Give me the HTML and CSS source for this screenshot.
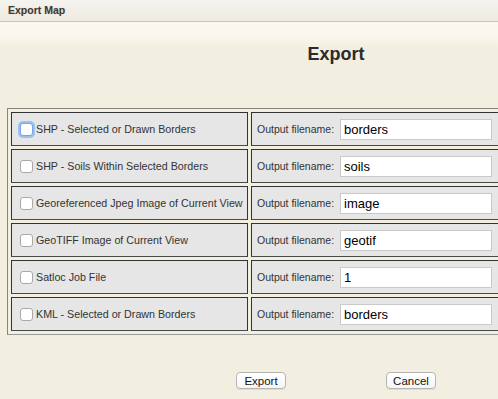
FILE: index.html
```html
<!DOCTYPE html>
<html lang="en">
<head>
  <meta charset="UTF-8" />
  <title>Export Map</title>
  <link rel="stylesheet" href="styles.css">
</head>
<body>
  <div class="window">
    <div class="titlebar">Export Map</div>

    <div class="dialog">
      <h1 class="heading">Export</h1>

      <table class="export-table">
        <tr>
          <td class="opt-cell"><label class="cell"><input type="checkbox" class="check focused">SHP - Selected or Drawn Borders</label></td>
          <td class="file-cell"><div class="cell"><span class="file-label">Output filename:</span><input type="text" class="file-input" value="borders"></div></td>
        </tr>
        <tr>
          <td class="opt-cell"><label class="cell"><input type="checkbox" class="check">SHP - Soils Within Selected Borders</label></td>
          <td class="file-cell"><div class="cell"><span class="file-label">Output filename:</span><input type="text" class="file-input" value="soils"></div></td>
        </tr>
        <tr>
          <td class="opt-cell"><label class="cell"><input type="checkbox" class="check">Georeferenced Jpeg Image of Current View</label></td>
          <td class="file-cell"><div class="cell"><span class="file-label">Output filename:</span><input type="text" class="file-input" value="image"></div></td>
        </tr>
        <tr>
          <td class="opt-cell"><label class="cell"><input type="checkbox" class="check">GeoTIFF Image of Current View</label></td>
          <td class="file-cell"><div class="cell"><span class="file-label">Output filename:</span><input type="text" class="file-input" value="geotif"></div></td>
        </tr>
        <tr>
          <td class="opt-cell"><label class="cell"><input type="checkbox" class="check">Satloc Job File</label></td>
          <td class="file-cell"><div class="cell"><span class="file-label">Output filename:</span><input type="text" class="file-input" value="1"></div></td>
        </tr>
        <tr>
          <td class="opt-cell"><label class="cell"><input type="checkbox" class="check">KML - Selected or Drawn Borders</label></td>
          <td class="file-cell"><div class="cell"><span class="file-label">Output filename:</span><input type="text" class="file-input" value="borders"></div></td>
        </tr>
      </table>

      <div class="actions">
        <button class="btn">Export</button>
        <button class="btn">Cancel</button>
      </div>
    </div>
  </div>
</body>
</html>
```

FILE: styles.css
```css
* {
  margin: 0;
  padding: 0;
  box-sizing: border-box;
}

html, body {
  width: 498px;
  height: 399px;
  overflow: hidden;
}

body {
  font-family: 'Liberation Sans', Arial, sans-serif;
  background: #f3efe0;
  color: #333;
}

.window {
  width: 498px;
  height: 399px;
  overflow: hidden;
  background: #f3efe0;
}

.titlebar {
  height: 22px;
  line-height: 20px;
  padding-left: 8px;
  font-size: 10.5px;
  font-weight: bold;
  color: #3b3b3b;
  text-shadow: 0 0 1px rgba(160,110,40,0.35);
  background: linear-gradient(#f5f3ee, #efebe2);
  border-bottom: 1px solid #cdc5b2;
}

.dialog {
  width: 672px;
  background: linear-gradient(#faf8f1 0, #f9f7ee 14px, #f3efe0 26px);
  padding-top: 22px;
  height: 377px;
}

.heading {
  font-size: 18px;
  line-height: 20px;
  font-weight: bold;
  text-align: center;
  color: #2b2b2b;
}

/* tabla de opciones */
.export-table {
  margin: 44px 0 0 7px;
  width: 659px;
  table-layout: fixed;
  border-collapse: separate;
  border-spacing: 3px;
  border: 1px solid #858585;
  border-bottom-color: #999;
}

.export-table td {
  padding: 0;
  background: #e6e6e6;
  border: 1px solid #333;
  border-bottom-color: #4a4a4a;
  vertical-align: middle;
}

.opt-cell {
  width: 237px;
}

.cell {
  display: flex;
  align-items: center;
  height: 32px;
  font-size: 10.7px;
  color: #333;
  white-space: nowrap;
  overflow: hidden;
}

.opt-cell .cell {
  padding-left: 8px;
}

.file-cell .cell {
  padding-left: 5px;
}

.check {
  appearance: none;
  -webkit-appearance: none;
  width: 13px;
  height: 13px;
  margin-right: 3px;
  background: #fff;
  border: 1px solid #a9a9a9;
  border-radius: 3px;
  flex: none;
}

.check.focused {
  border-color: #7aa2e0;
  box-shadow: 0 0 0 2px #9cc0f2;
}

.file-label {
  width: 83px;
  font-size: 10.5px;
  color: #333;
}

.file-input {
  width: 152px;
  height: 21px;
  border: 1px solid #c9c9c9;
  background: #fff;
  padding: 0 3px;
  font-family: 'Liberation Sans', Arial, sans-serif;
  font-size: 13px;
  color: #000;
  outline: none;
}

.actions {
  display: flex;
  justify-content: center;
  gap: 100px;
  margin-top: 37px;
}

.btn {
  width: 50px;
  height: 17px;
  font-family: 'Liberation Sans', Arial, sans-serif;
  font-size: 11.5px;
  color: #111;
  background: linear-gradient(#fff, #f6f6f6);
  border: 1px solid #b4b4b4;
  border-radius: 4px;
  box-shadow: 0 1px 0 rgba(0,0,0,0.08);
}
```
